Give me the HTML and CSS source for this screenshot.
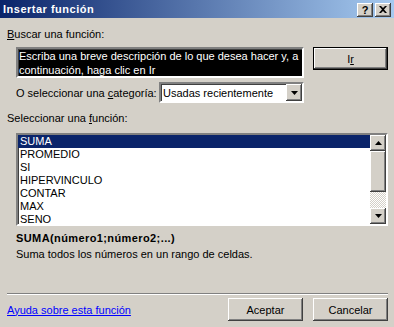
FILE: index.html
```html
<!DOCTYPE html>
<html lang="es">
<head>
<meta charset="utf-8">
<title>Insertar función</title>
<link rel="stylesheet" href="styles.css">
</head>
<body>
<div class="win">
  <div class="titlebar">
    <span class="title">Insertar función</span>
    <div class="tbtns">
      <span class="tbtn help">?</span>
      <span class="tbtn close"><svg width="8" height="7" viewBox="0 0 8 7"><path d="M0 0h2l2 2 2-2h2L5 3.5 8 7H6L4 5 2 7H0l3-3.5z" fill="#000"/></svg></span>
    </div>
  </div>
  <div class="content">
    <div class="lbl l1"><u>B</u>uscar una función:</div>
    <div class="search-row">
      <div class="search">Escriba una breve descripción de lo que desea hacer y, a continuación, haga clic en Ir</div>
      <button class="btn def">I<u>r</u></button>
    </div>
    <div class="cat-row">
      <span class="cat-lbl">O seleccionar una <u>c</u>ategoría:</span>
      <div class="combo">
        <span class="combo-val">Usadas recientemente</span>
        <span class="sbtn"><svg width="7" height="4" viewBox="0 0 7 4"><path d="M0 0h7L3.5 4z" fill="#000"/></svg></span>
      </div>
    </div>
    <div class="lbl l2">Seleccionar una <u>f</u>unción:</div>
    <div class="listbox">
      <ul class="items">
        <li class="sel">SUMA</li>
        <li>PROMEDIO</li>
        <li>SI</li>
        <li>HIPERVINCULO</li>
        <li>CONTAR</li>
        <li>MAX</li>
        <li>SENO</li>
      </ul>
      <div class="vscroll">
        <span class="sbtn up"><svg width="7" height="4" viewBox="0 0 7 4"><path d="M0 4h7L3.5 0z" fill="#000"/></svg></span>
        <span class="thumb"></span>
        <span class="track"></span>
        <span class="sbtn down"><svg width="7" height="4" viewBox="0 0 7 4"><path d="M0 0h7L3.5 4z" fill="#000"/></svg></span>
      </div>
    </div>
    <div class="sig">SUMA(número1;número2;...)</div>
    <div class="desc">Suma todos los números en un rango de celdas.</div>
    <div class="sep"></div>
    <div class="footer">
      <a class="helplink" href="#">Ayuda sobre esta función</a>
      <div class="actions">
        <button class="btn">Aceptar</button>
        <button class="btn">Cancelar</button>
      </div>
    </div>
  </div>
</div>
</body>
</html>
```

FILE: styles.css
```css
* { box-sizing: border-box; }
html, body { margin: 0; padding: 0; }
body {
  width: 394px;
  height: 327px;
  overflow: hidden;
  background: #d4d0c8;
  font-family: "Liberation Sans", Arial, sans-serif;
  font-size: 11px;
  color: #000;
}
.win { width: 394px; height: 327px; background: #d4d0c8; }
.titlebar {
  height: 18px;
  display: flex;
  align-items: center;
  justify-content: space-between;
  padding: 0 3px 0 3px;
  background: linear-gradient(to right, #0a246a, #a6caf0);
}
.title { color: #fff; font-weight: bold; font-size: 11px; line-height: 14px; letter-spacing: 0.5px; }
.tbtns { display: flex; gap: 2px; margin-top: 1px; }
.tbtn {
  width: 16px; height: 14px;
  background: #d4d0c8;
  box-shadow: inset -1px -1px #404040, inset 1px 1px #fff, inset -2px -2px #808080;
  display: flex; align-items: center; justify-content: center;
  font-weight: bold; font-size: 11px; line-height: 14px;
}
.content { padding: 0 6px 0 7px; display: flex; flex-direction: column; }
.lbl { line-height: 14px; }
.l1 { margin-top: 9px; }
.search-row { display: flex; justify-content: space-between; margin-top: 6px; padding-left: 9px; }
.search {
  width: 288px; height: 31px;
  background: #000; color: #fff;
  border: 2px solid; border-color: #808080 #fff #fff #808080;
  box-shadow: inset 1px 1px #404040;
  padding: 0 0 0 1px;
  line-height: 14px;
}
.btn {
  font-family: inherit; font-size: 11px; color: #000;
  width: 75px; height: 23px; padding: 0;
  background: #d4d0c8;
  border: none;
  box-shadow: inset -1px -1px #404040, inset 1px 1px #fff, inset -2px -2px #808080;
}
.btn.def {
  border: 1px solid #000;
  box-shadow: inset -1px -1px #404040, inset 1px 1px #fff, inset -2px -2px #808080;
}
.cat-row { display: flex; align-items: center; margin-top: 4px; padding-left: 9px; }
.cat-lbl { width: 143px; line-height: 14px; }
.combo {
  width: 145px; height: 21px;
  background: #fff;
  border: 2px solid; border-color: #808080 #fff #fff #808080;
  box-shadow: inset 1px 1px #404040;
  display: flex; align-items: center; justify-content: space-between;
  padding: 0 0 0 2px;
}
.combo-val { line-height: 14px; }
.sbtn {
  width: 16px; height: 17px;
  background: #d4d0c8;
  box-shadow: inset -1px -1px #404040, inset 1px 1px #fff, inset -2px -2px #808080;
  display: flex; align-items: center; justify-content: center;
  flex: none;
}
.l2 { margin-top: 8px; }
.listbox {
  margin: 8px 0 0 9px;
  height: 93px;
  background: #fff;
  border: 2px solid; border-color: #808080 #fff #fff #808080;
  box-shadow: inset 1px 1px #404040;
  display: flex;
  overflow: hidden;
}
.items { list-style: none; margin: 0; padding: 0; flex: 1; }
.items li { height: 13px; line-height: 13px; padding-left: 2px; }
.items li.sel { background: #0a246a; color: #fff; }
.vscroll { width: 16px; display: flex; flex-direction: column; flex: none; }
.vscroll .sbtn { height: 16px; }
.thumb {
  height: 41px; background: #d4d0c8;
  box-shadow: inset -1px -1px #404040, inset 1px 1px #fff, inset -2px -2px #808080;
}
.track {
  flex: 1;
  background-color: #fff;
  background-image: repeating-conic-gradient(#d4d0c8 0 25%, #fff 0 50%);
  background-size: 2px 2px;
}
.sig { margin: 5px 0 0 9px; font-weight: bold; line-height: 14px; letter-spacing: 0.4px; }
.desc { margin: 2px 0 0 9px; line-height: 14px; }
.sep { margin-top: 32px; height: 2px; border-top: 1px solid #808080; border-bottom: 1px solid #fff; }
.footer { display: flex; align-items: center; justify-content: space-between; margin-top: 3px; }
.helplink { color: #0000ff; text-decoration: underline; line-height: 14px; }
.actions { display: flex; gap: 10px; }
```
